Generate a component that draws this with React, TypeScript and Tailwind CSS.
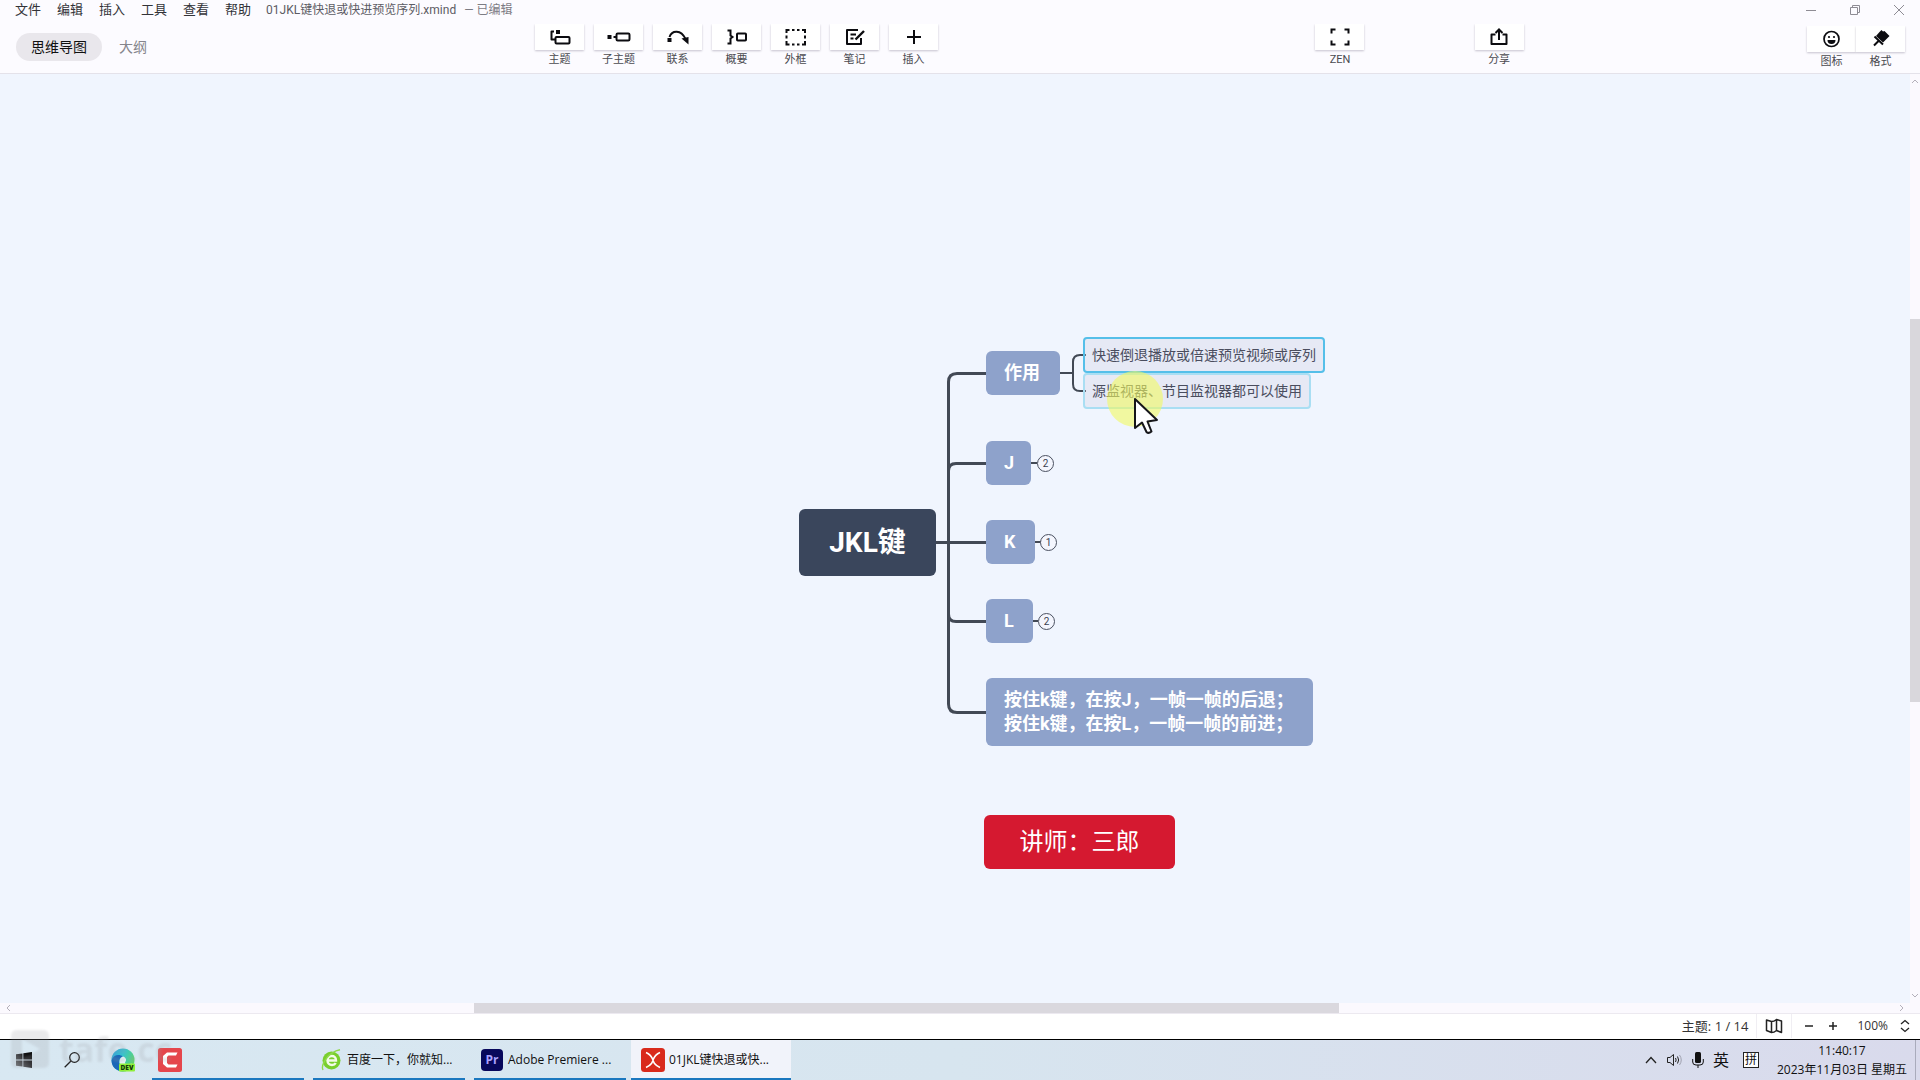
import type { ReactNode } from "react";

const ink = { fill: "none", stroke: "#0c0c10", strokeWidth: 2 } as const;

function Icon({ children, size = "size-6" }: { children: ReactNode; size?: string }) {
  return (
    <svg viewBox="0 0 24 24" className={size} aria-hidden="true">
      {children}
    </svg>
  );
}

const tools: { label: string; icon: ReactNode }[] = [
  {
    label: "主题",
    icon: (
      <>
        <path {...ink} d="M6 6.500H3.500V14.500H7" strokeLinejoin="round" />
        <rect x="8" y="5" width="4" height="4" fill="#0c0c10" />
        <rect {...ink} x="7.500" y="12" width="14" height="6.500" rx="1" />
      </>
    ),
  },
  {
    label: "子主题",
    icon: (
      <>
        <rect x="0.500" y="10" width="4" height="4" fill="#0c0c10" />
        <path {...ink} d="M6.500 12H9" />
        <rect {...ink} x="9.500" y="8.500" width="13" height="7" rx="1.200" />
      </>
    ),
  },
  {
    label: "联系",
    icon: (
      <>
        <rect x="1.500" y="13" width="4" height="4" fill="#0c0c10" />
        <path {...ink} d="M3.500 12C6 5 15 4.500 19.500 14" />
        <path d="M15.500 13.500L22.500 12V19.500Z" fill="#0c0c10" />
      </>
    ),
  },
  {
    label: "概要",
    icon: (
      <>
        <path {...ink} d="M2.500 5.500H5.500V10.500L7.500 12L5.500 13.500V18.500H2.500" />
        <rect {...ink} x="12" y="8.500" width="9" height="7" rx="0.800" />
      </>
    ),
  },
  {
    label: "外框",
    icon: (
      <path
        {...ink}
        d="M2.500 8V5H5.500M8 5H10.500M13 5H15.500M18 5H21V8M21 10.500V13.500M21 16V19.500H18M15.500 19.500H13M10.500 19.500H8M5.500 19.500H2.500V16M2.500 13.500V10.500"
      />
    ),
  },
  {
    label: "笔记",
    icon: (
      <>
        <path {...ink} d="M15 5H4V19H18V13" strokeLinejoin="round" />
        <path {...ink} d="M7.500 9.500H13M7.500 13.500H10.500" />
        <path {...ink} d="M12.500 14.500L21 6" strokeWidth="2.400" />
      </>
    ),
  },
  { label: "插入", icon: <path {...ink} d="M5 12H19M12 5V19" /> },
];

function ToolButton({ label, children }: { label: string; children: ReactNode }) {
  return (
    <button className="flex w-[49px] shrink-0 flex-col items-center">
      <span className="flex h-[26px] w-full items-center justify-center bg-white shadow-[0_1px_2px_rgba(60,50,80,0.28)] [clip-path:inset(0_-3px_-4px_-3px)]">
        {children}
      </span>
      <span className="pt-0.5 text-[11px] leading-4 text-[#4a4a50]">{label}</span>
    </button>
  );
}

function Header() {
  return (
    <header className="flex flex-col border-b border-[#e4e2ea] bg-[#fcfbff]">
      <div className="flex h-6 items-start justify-between pl-[15px]">
        <div className="flex h-5 items-center">
          <nav className="flex gap-4 text-[13px] leading-5 text-[#333338]">
            {["文件", "编辑", "插入", "工具", "查看", "帮助"].map((m) => (
              <button key={m}>{m}</button>
            ))}
          </nav>
          <span className="ml-[15px] text-xs leading-5 text-[#5c5c64]">01JKL键快退或快进预览序列.xmind</span>
          <span className="ml-2 text-xs leading-5 text-[#7c7c84]">— 已编辑</span>
        </div>
        <div className="flex h-5 items-center gap-8 pr-[15px] text-[#8e8c94]">
          <button aria-label="最小化">
            <svg viewBox="0 0 12 12" className="size-3"><path d="M1 6.500H11" stroke="currentColor" /></svg>
          </button>
          <button aria-label="还原">
            <svg viewBox="0 0 12 12" className="size-3" fill="none" stroke="currentColor">
              <path d="M1.500 3.500H8.500V10.500H1.500ZM3.500 3.500V1.500H10.500V8.500H8.500" />
            </svg>
          </button>
          <button aria-label="关闭">
            <svg viewBox="0 0 12 12" className="size-3"><path d="M1 1L11 11M11 1L1 11" stroke="currentColor" /></svg>
          </button>
        </div>
      </div>
      <div className="flex h-[49px] items-start">
        <div className="flex w-[535px] shrink-0 items-center gap-[17px] pt-[9px] pl-4 text-sm">
          <button className="rounded-full bg-[#e9e7ec] px-[15px] py-1 text-[#111]">思维导图</button>
          <button className="text-[#85858c]">大纲</button>
        </div>
        <div className="flex gap-2.5">
          {tools.map((t) => (
            <ToolButton key={t.label} label={t.label}>
              <Icon>{t.icon}</Icon>
            </ToolButton>
          ))}
        </div>
        <div className="flex-[377]" />
        <ToolButton label="ZEN">
          <Icon>
            <path {...ink} d="M3.500 8.500V4.500H7.500M16.500 4.500H20.500V8.500M20.500 15.500V19.500H16.500M7.500 19.500H3.500V15.500" />
          </Icon>
        </ToolButton>
        <div className="flex-[110]" />
        <ToolButton label="分享">
          <Icon>
            <path {...ink} d="M8.500 9.500H4.500V19H19.500V9.500H15.500" strokeLinejoin="round" />
            <path {...ink} d="M12 15V5M8.500 8L12 4.500L15.500 8" />
          </Icon>
        </ToolButton>
        <div className="flex-[283]" />
        <div className="mr-[15px] flex pt-0.5">
          <ToolButton label="图标">
            <Icon>
              <circle {...ink} cx="11.500" cy="12" r="7.500" strokeWidth="1.700" />
              <circle cx="9" cy="10" r="1.100" fill="#0c0c10" />
              <circle cx="14" cy="10" r="1.100" fill="#0c0c10" />
              <path d="M7.500 13H15.500A4 4 0 0 1 7.500 13Z" fill="#0c0c10" />
            </Icon>
          </ToolButton>
          <ToolButton label="格式">
            <Icon>
              <path d="M10.500 5L12.500 3L14 4.500L15.500 4L20.500 9L14 15.500L7 9Z" fill="#0c0c10" />
              <path d="M5.500 9.500L14 17.500M10 13.500L5 18.500" stroke="#0c0c10" strokeWidth="2" fill="none" />
            </Icon>
          </ToolButton>
        </div>
      </div>
    </header>
  );
}

function Topic({ className, children }: { className: string; children: ReactNode }) {
  return (
    <div
      className={`absolute flex items-center rounded-md bg-[#8ea2cb] px-[18px] text-lg leading-6 font-bold whitespace-pre text-white ${className}`}
    >
      {children}
    </div>
  );
}

function Count({ className, children }: { className: string; children: ReactNode }) {
  return (
    <button
      className={`absolute flex size-[17px] items-center justify-center rounded-full border border-[#4a5060] bg-[#f4f6fe] text-[10px] leading-none text-[#3a4050] ${className}`}
    >
      {children}
    </button>
  );
}

function MindMap() {
  return (
    <div className="relative min-w-0 flex-1 overflow-hidden bg-[#f0f5fe] font-[Roboto,'Noto_Sans_CJK_SC',sans-serif]">
      <svg className="absolute top-0 left-0 h-[760px] w-[1400px]" viewBox="0 74 1400 760" fill="none" stroke="#424955" aria-hidden="true">
        <g strokeWidth="3">
          <path d="M936 542.500H986" />
          <path d="M986 373.500H957Q948.500 373.500 948.500 382V704Q948.500 712.500 957 712.500H986" />
          <path d="M986 463.500H956Q948.500 463.500 948.500 471" />
          <path d="M986 621.500H956Q948.500 621.500 948.500 614" />
        </g>
        <g strokeWidth="2">
          <path d="M1060 373H1073M1086 355H1080Q1073 355 1073 362V384Q1073 391 1080 391H1086" />
          <path d="M1031 463H1037M1035 542H1041M1032 621H1038" />
        </g>
      </svg>

      <div className="absolute top-[435px] left-[799px] flex h-[67px] w-[137px] items-center justify-center rounded-md bg-[#3a465c] text-[28px] leading-9 font-bold text-white">
        JKL键
      </div>

      <Topic className="top-[277px] left-[986px] h-11 w-[74px]">作用</Topic>
      <Topic className="top-[367px] left-[986px] h-11 w-[45px]">J</Topic>
      <Topic className="top-[446px] left-[986px] h-11 w-[49px]">K</Topic>
      <Topic className="top-[525px] left-[986px] h-11 w-[47px]">L</Topic>
      <Topic className="top-[604px] left-[986px] h-[68px] w-[327px]">
        {"按住k键，在按J，一帧一帧的后退；\n按住k键，在按L，一帧一帧的前进；"}
      </Topic>

      <Count className="top-[381px] left-[1037px]">2</Count>
      <Count className="top-[460px] left-[1040px]">1</Count>
      <Count className="top-[539px] left-[1038px]">2</Count>

      <div className="absolute top-[299px] left-[1083px] flex h-9 w-[228px] items-center rounded-sm border-2 border-[#a9def3] bg-[#d0cde0]/30 px-[7px] text-sm whitespace-nowrap text-[#4a4d5e]">
        源监视器、节目监视器都可以使用
      </div>
      <div className="absolute top-[263px] left-[1083px] flex h-9 w-[242px] items-center rounded-sm border-2 border-[#55bfe9] bg-[#d0cde0]/30 px-[7px] text-sm whitespace-nowrap text-[#4a4d5e]">
        快速倒退播放或倍速预览视频或序列
      </div>

      <div className="absolute top-[741px] left-[984px] flex h-[54px] w-[191px] items-center justify-center rounded-md bg-[#d51930] text-2xl text-white">
        讲师：三郎
      </div>

      <div className="absolute top-[297px] left-[1107px] size-14 rounded-full bg-[#f2fa60]/60" />
      <svg className="absolute top-[323px] left-[1133px] h-[40px] w-[26px]" viewBox="0 0 26 40" aria-hidden="true">
        <path
          d="M2 2V31L9 25.500L13.500 35Q15.500 37 18.500 34.500L14.500 24.500L24 23Z"
          fill="#fff"
          stroke="#16161a"
          strokeWidth="2"
          strokeLinejoin="round"
        />
      </svg>
    </div>
  );
}

function Chevron({ d, className }: { d: string; className: string }) {
  return (
    <svg viewBox="0 0 10 10" className={`size-2.5 ${className}`} fill="none" stroke="#b4b0ba" aria-hidden="true">
      <path d={d} />
    </svg>
  );
}

function StatusBar() {
  return (
    <footer className="flex h-[25px] items-center justify-end bg-white pr-2.5 pb-px text-xs text-[#333]">
      <span className="pr-2 text-[13px] leading-5">主题: 1 / 14</span>
      <button aria-label="导航图" className="flex h-6 w-9 items-center justify-center border-x border-[#f0eef3]">
        <svg viewBox="0 0 18 16" className="h-4 w-[18px]" fill="none" stroke="#222" strokeWidth="1.500" strokeLinejoin="round">
          <path d="M1.500 2L6.500 3.500V14.500L1.500 12.500ZM6.500 3.500Q9 3.500 11.500 1.500V12.500Q9 14.500 6.500 14.500M11.500 1.500L16.500 3V14.500L11.500 12.500" />
        </svg>
      </button>
      <button aria-label="缩小" className="ml-[11px] size-3">
        <svg viewBox="0 0 12 12"><path d="M2 6H10" stroke="#222" strokeWidth="1.500" /></svg>
      </button>
      <button aria-label="放大" className="ml-3 size-3">
        <svg viewBox="0 0 12 12"><path d="M2 6H10M6 2V10" stroke="#222" strokeWidth="1.500" /></svg>
      </button>
      <span className="ml-[18px] leading-5">100%</span>
      <button aria-label="缩放比例" className="ml-3 w-2.5">
        <svg viewBox="0 0 10 14" fill="none" stroke="#222" strokeWidth="1.300"><path d="M1 5L5 1.500L9 5M1 9L5 12.500L9 9" /></svg>
      </button>
    </footer>
  );
}

function Task({ className, label, children }: { className: string; label?: string; children: ReactNode }) {
  return (
    <button aria-label={label ?? "Camtasia"} className={`flex h-full shrink-0 items-center border-b-2 border-[#1b78bf] pt-0.5 text-xs whitespace-nowrap text-[#111] ${className}`}>
      {children}
      {label && <span>{label}</span>}
    </button>
  );
}

function Taskbar() {
  return (
    <div className="flex h-[41px] items-stretch border-t border-black bg-linear-to-r from-[#d8e8f2] via-[#d7e5ef] to-[#d9daec]">
      <button aria-label="开始" className="ml-4 self-center">
        <svg viewBox="0 0 16 16" className="size-4">
          <defs>
            <linearGradient id="win" x1="0" y1="1" x2="1" y2="0">
              <stop offset="0" stopColor="#77797c" />
              <stop offset="0.600" stopColor="#1c1c1e" />
              <stop offset="1" stopColor="#000" />
            </linearGradient>
          </defs>
          <path fill="url(#win)" d="M0 2.300L6.500 1.400V7.600H0ZM7.300 1.300L16 0V7.600H7.300ZM0 8.400H6.500V14.600L0 13.700ZM7.300 8.400H16V16L7.300 14.700Z" />
        </svg>
      </button>
      <button aria-label="搜索" className="ml-8 self-center">
        <svg viewBox="0 0 16 16" className="size-4" fill="none" stroke="#222" strokeWidth="1.300">
          <circle cx="10.500" cy="5.500" r="4.800" />
          <path d="M7 9L0.700 15.300" />
        </svg>
      </button>
      <button aria-label="Microsoft Edge Dev" className="ml-[31px] self-center">
        <svg viewBox="0 0 24 24" className="size-6">
          <defs>
            <linearGradient id="edgeTop" x1="0" y1="0" x2="1" y2="0.500">
              <stop offset="0" stopColor="#2a9fe0" />
              <stop offset="0.500" stopColor="#35c4cf" />
              <stop offset="1" stopColor="#5fd66d" />
            </linearGradient>
          </defs>
          <circle cx="12" cy="12" r="11.500" fill="url(#edgeTop)" />
          <path d="M0.600 12C2 7 8 5.500 12 8.500C9 9 7.500 12 8.500 15.500C9.500 19 13 21 16 22.500C9 25 0 21 0.600 12Z" fill="#1b67b8" />
          <path d="M12 8.500C15 9.500 16 12 14 14.500C13.500 16 16 17 21 15.500L18 19C12 20 8.500 17 8.500 14C8.500 11 10 9 12 8.500Z" fill="#e8f3f8" />
          <rect x="8" y="15.500" width="16" height="8" rx="1" fill="#8fef3a" />
          <text x="16" y="22" textAnchor="middle" fontSize="6.500" fontWeight="800" fill="#14380c">DEV</text>
        </svg>
      </button>
      <Task className="ml-[17px] w-[152px] pl-1.5">
        <svg viewBox="0 0 24 24" className="size-6">
          <rect width="24" height="24" rx="2.500" fill="#e5464c" />
          <path d="M19.500 4.500H9L5 8V16L9 19.500H18L19.500 16.500H10.500L9 15V9L10.500 7.500H18Z" fill="#fff" />
        </svg>
      </Task>
      <Task className="ml-[9px] w-[152px] gap-[3px] pl-[7px]" label="百度一下，你就知...">
        <svg viewBox="0 0 24 24" className="size-6" fill="none">
          <circle cx="11.500" cy="12.500" r="9" fill="#79cf2c" />
          <path d="M7.500 12.500H16C16 9.500 14 8 11.800 8C9.300 8 7.500 10 7.500 12.500C7.500 15 9.300 17 12 17C13.700 17 15 16.300 15.700 15" stroke="#f4fbe8" strokeWidth="2.400" />
          <path d="M3 22C0.500 17 8 4 20 1.800" stroke="#8fd94a" strokeWidth="1.400" />
        </svg>
      </Task>
      <Task className="ml-[9px] w-[152px] gap-[5px] pl-[7px]" label="Adobe Premiere ...">
        <span aria-hidden="true" className="flex size-[22px] items-center justify-center rounded bg-[#08085c] text-xs leading-none font-bold text-[#a9a0ff]">
          Pr
        </span>
      </Task>
      <Task className="ml-[5px] w-40 gap-1 bg-[#f1f3fa] pl-2.5" label="01JKL键快退或快...">
        <svg viewBox="0 0 24 24" className="size-6" fill="none">
          <rect width="24" height="24" rx="3.500" fill="#d92a1c" />
          <path d="M5 4.500Q10 6.500 12 12Q14 6.500 19 4.500M5 19.500Q8.500 18 10.500 15.500L12 12.500L13.500 15.500Q15.500 18 19 19.500" stroke="#fff" strokeWidth="1.600" />
        </svg>
      </Task>

      <div className="ml-auto flex items-center text-xs text-[#111]">
        <button aria-label="显示隐藏的图标">
          <svg viewBox="0 0 12 8" className="h-2 w-3" fill="none" stroke="#222" strokeWidth="1.300"><path d="M1 7L6 1.500L11 7" /></svg>
        </button>
        <button aria-label="音量" className="ml-2.5">
          <svg viewBox="0 0 16 14" className="h-3.5 w-4" fill="none" stroke="#222">
            <path d="M0.500 4.500H3L6.500 1.500V12.500L3 9.500H0.500Z" />
            <path d="M8.500 5Q9.800 7 8.500 9M10.500 3.500Q12.800 7 10.500 10.500" />
            <path d="M12.500 2Q16 7 12.500 12" stroke="#a0a2b0" />
          </svg>
        </button>
        <button aria-label="麦克风" className="ml-[9px]">
          <svg viewBox="0 0 12 16" className="h-4 w-3" fill="none" stroke="#111">
            <rect x="3" y="0" width="6" height="11" rx="1.500" fill="#111" stroke="none" />
            <path d="M0.700 7V10Q0.700 13 4 13H8Q11.300 13 11.300 10V7M6 13V16" />
          </svg>
        </button>
        <button className="ml-[9px] text-base leading-5">英</button>
        <button className="ml-3.5 flex size-4 items-center justify-center border border-[#222] bg-white text-xs leading-none">拼</button>
        <div className="ml-[18px] flex flex-col items-center gap-px text-xs leading-[18px] whitespace-nowrap">
          <time>11:40:17</time>
          <time>2023年11月03日 星期五</time>
        </div>
        <button aria-label="显示桌面" className="ml-2 h-10 w-[5px] border-l border-[#a9abbc]" />
      </div>
    </div>
  );
}

export default function App() {
  return (
    <div className="relative flex h-screen flex-col overflow-hidden bg-white font-['Open_Sans','Noto_Sans_CJK_SC',sans-serif]">
      <div className="font-[Roboto,'Noto_Sans_CJK_SC',sans-serif]">
        <Header />
      </div>
      <main className="flex min-h-0 flex-1 flex-col">
        <div className="flex min-h-0 flex-1">
          <MindMap />
          <div className="flex w-2.5 flex-col items-center bg-[#fbf9fe]">
            <Chevron d="M2 7L5 4L8 7" className="mt-0.5" />
            <div className="flex-[233]" />
            <div className="w-full flex-[383] bg-[#d9d7dc]" />
            <div className="flex-[289]" />
            <Chevron d="M2 3L5 6L8 3" className="mb-0.5" />
          </div>
        </div>
        <div className="flex h-[11px] items-center border-b border-[#ece9f0] bg-[#fbf9fe] pr-2.5">
          <Chevron d="M7 2L4 5L7 8" className="ml-[3px]" />
          <div className="flex-[461]" />
          <div className="h-full flex-[865] bg-[#dad8de]" />
          <div className="flex-[558]" />
          <Chevron d="M3 2L6 5L3 8" className="mr-[3px]" />
        </div>
      </main>
      <StatusBar />
      <Taskbar />
      <div className="pointer-events-none absolute bottom-3 left-[11px] flex items-center gap-2.5 text-[#9a9aa0] opacity-20 blur-[1px]">
        <svg viewBox="0 0 38 38" className="size-[38px]" aria-hidden="true">
          <path fill="currentColor" fillRule="evenodd" d="M6 0H32Q38 0 38 6V32Q38 38 32 38H6Q0 38 0 32V6Q0 0 6 0ZM11 9V29L29 19Z" />
        </svg>
        <span className="text-[34px] leading-9 font-bold">tafe.cc</span>
      </div>
    </div>
  );
}
